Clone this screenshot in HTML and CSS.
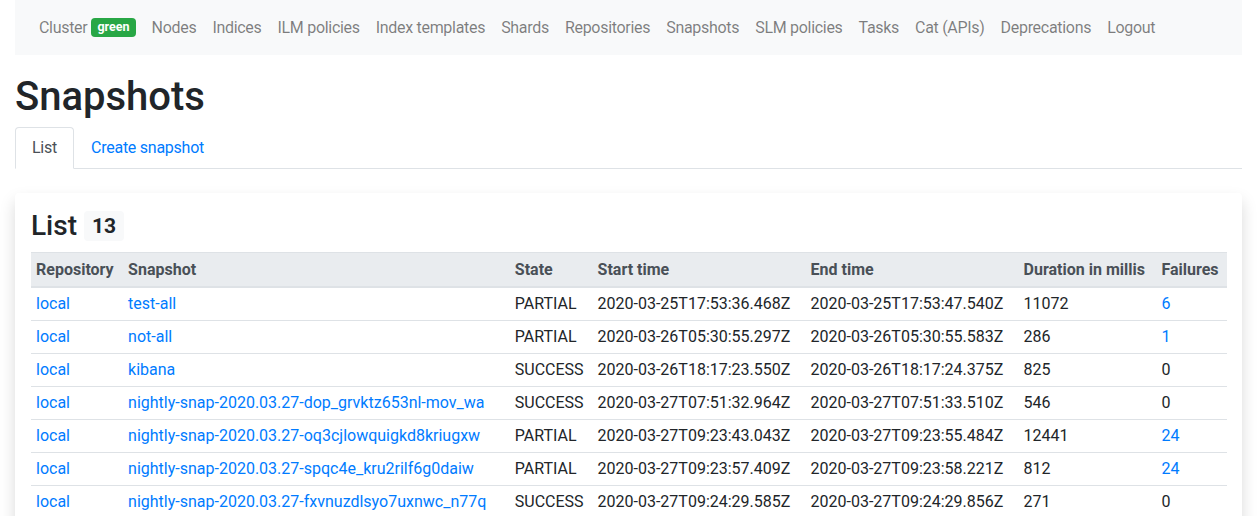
FILE: index.html
```html
<!DOCTYPE html>
<html lang="en">
<head>
<meta charset="utf-8">
<title>Snapshots</title>
<link rel="stylesheet" href="styles.css">
</head>
<body>
<div class="page">
  <nav class="navbar">
    <a class="nav-link" href="#">Cluster <span class="badge-green">green</span></a>
    <a class="nav-link" href="#">Nodes</a>
    <a class="nav-link" href="#">Indices</a>
    <a class="nav-link" href="#">ILM policies</a>
    <a class="nav-link" href="#">Index templates</a>
    <a class="nav-link" href="#">Shards</a>
    <a class="nav-link" href="#">Repositories</a>
    <a class="nav-link" href="#">Snapshots</a>
    <a class="nav-link" href="#">SLM policies</a>
    <a class="nav-link" href="#">Tasks</a>
    <a class="nav-link" href="#">Cat (APIs)</a>
    <a class="nav-link" href="#">Deprecations</a>
    <a class="nav-link" href="#">Logout</a>
  </nav>
  <h1 class="title">Snapshots</h1>
  <div class="tabs">
    <a class="tab active" href="#">List</a>
    <a class="tab" href="#">Create snapshot</a>
  </div>
  <div class="card">
    <h3 class="card-title">List <span class="badge-count">13</span></h3>
    <table class="table">
      <thead>
        <tr><th>Repository</th><th>Snapshot</th><th>State</th><th>Start time</th><th>End time</th><th>Duration in millis</th><th>Failures</th></tr>
      </thead>
      <tbody>
        <tr><td><a href="#">local</a></td><td><a href="#">test-all</a></td><td>PARTIAL</td><td>2020-03-25T17:53:36.468Z</td><td>2020-03-25T17:53:47.540Z</td><td>11072</td><td><a href="#">6</a></td></tr>
        <tr><td><a href="#">local</a></td><td><a href="#">not-all</a></td><td>PARTIAL</td><td>2020-03-26T05:30:55.297Z</td><td>2020-03-26T05:30:55.583Z</td><td>286</td><td><a href="#">1</a></td></tr>
        <tr><td><a href="#">local</a></td><td><a href="#">kibana</a></td><td>SUCCESS</td><td>2020-03-26T18:17:23.550Z</td><td>2020-03-26T18:17:24.375Z</td><td>825</td><td>0</td></tr>
        <tr><td><a href="#">local</a></td><td><a href="#">nightly-snap-2020.03.27-dop_grvktz653nl-mov_wa</a></td><td>SUCCESS</td><td>2020-03-27T07:51:32.964Z</td><td>2020-03-27T07:51:33.510Z</td><td>546</td><td>0</td></tr>
        <tr><td><a href="#">local</a></td><td><a href="#">nightly-snap-2020.03.27-oq3cjlowquigkd8kriugxw</a></td><td>PARTIAL</td><td>2020-03-27T09:23:43.043Z</td><td>2020-03-27T09:23:55.484Z</td><td>12441</td><td><a href="#">24</a></td></tr>
        <tr><td><a href="#">local</a></td><td><a href="#">nightly-snap-2020.03.27-spqc4e_kru2rilf6g0daiw</a></td><td>PARTIAL</td><td>2020-03-27T09:23:57.409Z</td><td>2020-03-27T09:23:58.221Z</td><td>812</td><td><a href="#">24</a></td></tr>
        <tr><td><a href="#">local</a></td><td><a href="#">nightly-snap-2020.03.27-fxvnuzdlsyo7uxnwc_n77q</a></td><td>SUCCESS</td><td>2020-03-27T09:24:29.585Z</td><td>2020-03-27T09:24:29.856Z</td><td>271</td><td>0</td></tr>
      </tbody>
    </table>
  </div>
</div>
</body>
</html>
```

FILE: styles.css
```css
* { box-sizing: border-box; }
html, body { margin: 0; padding: 0; background: #fff; }
body {
  font-family: Roboto, "Liberation Sans", Arial, sans-serif;
  font-size: 16px;
  line-height: 1.5;
  color: #212529;
}
a { color: #007bff; text-decoration: none; }
.page { padding: 0 15px; }
.navbar {
  display: flex;
  align-items: center;
  background: #f8f9fa;
  height: 55px;
  padding: 0 16px;
}
.nav-link {
  color: rgba(0,0,0,.5);
  padding: 0 8px;
  display: flex;
  align-items: center;
  gap: 4px;
  letter-spacing: -0.3px;
}
.badge-green {
  display: inline-block;
  background: #28a745;
  color: #fff;
  font-size: 12.5px;
  font-weight: 700;
  line-height: 1;
  letter-spacing: 0;
  padding: 3px 6px 3px;
  border-radius: 4px;
}
.title {
  font-size: 40px;
  font-weight: 500;
  line-height: 1.2;
  margin: 18px 0 6px;
}
.tabs {
  display: flex;
  border-bottom: 1px solid #dee2e6;
}
.tab {
  padding: 8px 16px;
  margin-bottom: -1px;
  border: 1px solid transparent;
  border-radius: 4px 4px 0 0;
  letter-spacing: -0.25px;
}
.tab.active {
  color: #495057;
  background: #fff;
  border-color: #dee2e6 #dee2e6 #fff;
}
.card {
  margin-top: 24px;
  padding: 16px 15px 16px 16px;
  border-radius: 4px;
  box-shadow: 0 0.5rem 1rem rgba(0,0,0,.15);
  background: #fff;
}
.card-title {
  font-size: 28px;
  font-weight: 500;
  line-height: 1.2;
  margin: 0 0 9px;
  display: flex;
  align-items: center;
  gap: 7px;
}
.badge-count {
  font-size: 21px;
  font-weight: 700;
  background: #f8f9fa;
  border-radius: 4px;
  padding: 3px 8px;
  line-height: 1.15;
}
.table {
  width: 100%;
  border-collapse: collapse;
}
.table th, .table td {
  text-align: left;
  padding: 4px 5px;
  border-top: 1px solid #dee2e6;
  white-space: nowrap;
  vertical-align: top;
}
.table thead th {
  background: #e9ecef;
  color: #495057;
  font-weight: 700;
  padding: 5px 5px 4px;
  border-bottom: 2px solid #dee2e6;
}
```
